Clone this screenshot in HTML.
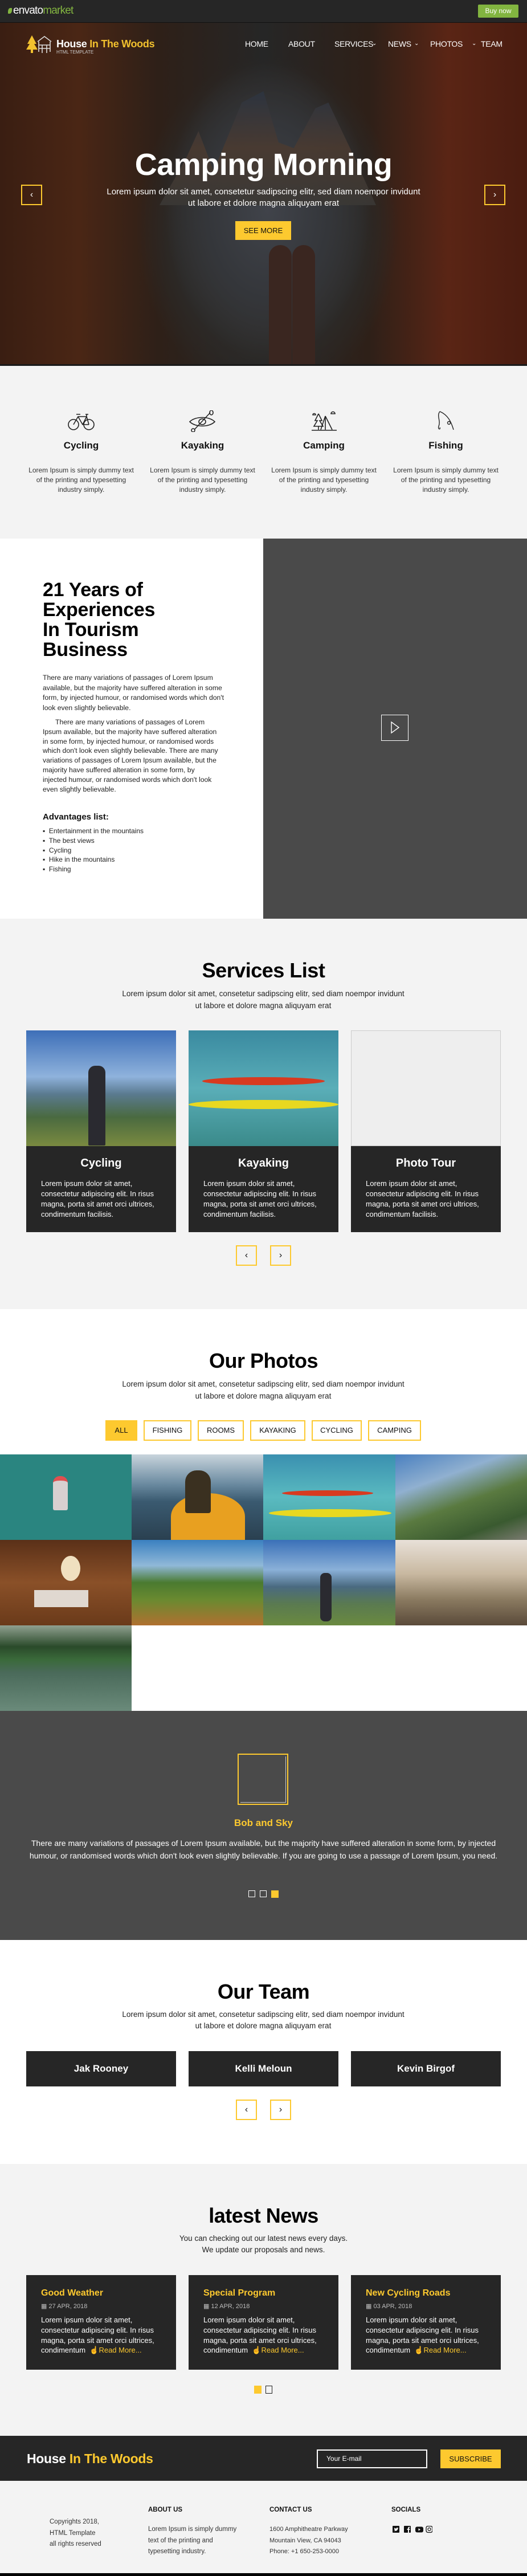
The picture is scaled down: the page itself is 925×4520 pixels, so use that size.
<!DOCTYPE html>
<html><head><meta charset="utf-8">
<style>
*{margin:0;padding:0;box-sizing:border-box}
body{width:925px;height:4520px;position:relative;font-family:"Liberation Sans",sans-serif;background:#fff;overflow:hidden;color:#111}
.a{position:absolute}
.c{text-align:center}
.sec{position:absolute;left:0;width:925px}
h2{font-size:36px;font-weight:bold;color:#000;letter-spacing:-0.5px}
.sub{font-size:13.5px;line-height:21px;color:#222}
.btn{border:2px solid #fdc92f;width:37px;height:36px;display:flex;align-items:center;justify-content:center;font-size:16px;color:#111}
.card{background:#262626;color:#fff}
</style></head><body>

<!-- top bar -->
<div class="sec" style="top:0;height:40px;background:#262626;border-bottom:1px solid #111"></div>
<div class="a" style="left:14px;top:8px;font-size:19px;color:#fff;letter-spacing:-0.8px"><span style="display:inline-block;width:7px;height:10px;background:#82b440;border-radius:60% 10% 60% 10%;margin-right:2px"></span>envato<span style="color:#82b440;font-weight:300">market</span></div>
<div class="a" style="left:839px;top:8px;width:71px;height:23px;background:#82b440;border-radius:2px;color:#fff;font-size:12px;line-height:23px;text-align:center">Buy now</div>

<!-- hero -->
<div class="sec" style="top:40px;height:602px;background:
radial-gradient(ellipse 180px 260px at 470px 330px,#40434a 0%,#34363a 60%,transparent 100%),
radial-gradient(ellipse 230px 300px at 470px 360px,#3a3836 0%,#2c2a28 70%,transparent 100%),
linear-gradient(90deg,#3a1e12 0%,#4a2615 15%,#2e2018 30%,#262626 50%,#2e2018 70%,#5a2515 85%,#4a1c10 100%)"></div>
<div class="a" style="left:280px;top:160px;width:380px;height:200px;background:linear-gradient(180deg,#2c3440,#4a3a30 50%,#3a3835);clip-path:polygon(0 100%,12% 60%,18% 35%,25% 70%,38% 10%,48% 0%,55% 45%,62% 50%,72% 15%,78% 10%,88% 50%,100% 100%);opacity:.9"></div>
<div class="a" style="left:472px;top:430px;width:40px;height:212px;background:#3a2620;border-radius:20px 20px 0 0"></div>
<div class="a" style="left:513px;top:430px;width:40px;height:212px;background:#3a2620;border-radius:20px 20px 0 0"></div>
<div class="sec" style="top:639px;height:3px;background:#1a1a1a"></div>

<svg class="a" style="left:46px;top:61px" width="46" height="34" viewBox="0 0 46 34"><path d="M10 1L2 16h4L0 26h8v6h4v-6h8L14 16h4z" fill="#f2c12e"/><path d="M20 12L32 3 44 12M22 12v18M42 12v18M22 18h20M22 24h20M28 18v14M36 18v14" stroke="#ddd" stroke-width="1.6" fill="none"/></svg>
<div class="a" style="left:99px;top:67px;font-size:18px;font-weight:bold;color:#fff;letter-spacing:-0.3px">House <span style="color:#f2c12e">In The Woods</span></div>
<div class="a" style="left:99px;top:87px;font-size:8px;color:#ccc">HTML TEMPLATE</div>
<div class="a" style="top:69px;left:0;width:925px;font-size:14px;color:#fff;letter-spacing:-0.3px">
<span class="a" style="left:430px">HOME</span><span class="a" style="left:506px">ABOUT</span><span class="a" style="left:587px">SERVICES</span><span class="a" style="left:653px;font-size:10px;top:2px">&#8964;</span><span class="a" style="left:681px">NEWS</span><span class="a" style="left:727px;font-size:10px;top:2px">&#8964;</span><span class="a" style="left:755px">PHOTOS</span><span class="a" style="left:828px;font-size:10px;top:2px">&#8964;</span><span class="a" style="left:844px">TEAM</span></div>

<div class="a c" style="left:0;top:258px;width:925px;font-size:54px;font-weight:bold;color:#fff;letter-spacing:-0.5px">Camping Morning</div>
<div class="a c" style="left:180px;top:327px;width:565px;font-size:15px;line-height:20px;color:#fff">Lorem ipsum dolor sit amet, consetetur sadipscing elitr, sed diam noempor invidunt ut labore et dolore magna aliquyam erat</div>
<div class="a c" style="left:413px;top:388px;width:98px;height:33px;background:#fdc92f;font-size:13px;line-height:33px;color:#111">SEE MORE</div>
<div class="a btn" style="left:37px;top:324px;height:36px;color:#fff">&#8249;</div>
<div class="a btn" style="left:850px;top:324px;height:36px;color:#fff">&#8250;</div>

<!-- features -->
<div class="sec" style="top:642px;height:303px;background:#f3f3f3"></div>
<svg class="a" style="left:119px;top:722px" width="48" height="34" viewBox="0 0 48 34" fill="none" stroke="#222" stroke-width="1.6"><circle cx="10" cy="23" r="9"/><circle cx="37" cy="23" r="9"/><path d="M10 23l8-14h15l4 14M18 9l8 14h11M26 23l7-14M15 5h7M31 5h5M33 5v4"/></svg>
<svg class="a" style="left:331px;top:720px" width="48" height="38" viewBox="0 0 48 38" fill="none" stroke="#222" stroke-width="1.6"><path d="M2 20C12 10 36 10 46 20C36 30 12 30 2 20Z"/><ellipse cx="24" cy="20" rx="6" ry="5"/><path d="M38 4L10 34"/><ellipse cx="40" cy="4" rx="3" ry="4"/><ellipse cx="8" cy="35" rx="3" ry="3"/></svg>
<svg class="a" style="left:545px;top:720px" width="48" height="38" viewBox="0 0 48 38" fill="none" stroke="#222" stroke-width="1.6"><path d="M14 6L8 18h4L6 28h8v6M14 6l6 12h-4l6 10h-8M26 10L18 34M26 10L38 34M26 10v24M2 35h44"/><path d="M4 8a2 2 0 0 1 5 0zM36 6a3 3 0 0 1 7 0z"/></svg>
<svg class="a" style="left:764px;top:720px" width="36" height="38" viewBox="0 0 36 38" fill="none" stroke="#222" stroke-width="1.4"><path d="M8 2C2 10 10 18 6 28c-2 6 4 6 2 2M8 2c14 6 20 18 24 32"/><circle cx="24" cy="22" r="2.5"/></svg>
<div class="a" style="top:772px;left:0;width:925px;font-size:17px;font-weight:bold">
<span class="a c" style="left:36px;width:213px">Cycling</span><span class="a c" style="left:249px;width:213px">Kayaking</span><span class="a c" style="left:462px;width:213px">Camping</span><span class="a c" style="left:676px;width:213px">Fishing</span></div>
<div class="a" style="top:817px;left:0;width:925px;font-size:12px;line-height:17px;color:#333">
<span class="a c" style="left:50px;width:185px">Lorem Ipsum is simply dummy text of the printing and typesetting industry simply.</span><span class="a c" style="left:263px;width:185px">Lorem Ipsum is simply dummy text of the printing and typesetting industry simply.</span><span class="a c" style="left:476px;width:185px">Lorem Ipsum is simply dummy text of the printing and typesetting industry simply.</span><span class="a c" style="left:690px;width:185px">Lorem Ipsum is simply dummy text of the printing and typesetting industry simply.</span></div>

<!-- about -->
<div class="a" style="left:462px;top:945px;width:463px;height:667px;background:#4a4a4a"></div>
<div class="a" style="left:669px;top:1254px;width:48px;height:46px;border:1.5px solid #fff"><svg width="45" height="43" viewBox="0 0 45 43"><path d="M17 12l13 9.5-13 9.5z" fill="none" stroke="#fff" stroke-width="1.4"/></svg></div>
<div class="a" style="left:75px;top:1018px;font-size:34px;line-height:35px;font-weight:bold;color:#000;letter-spacing:-0.3px">21 Years of<br>Experiences<br>In Tourism<br>Business</div>
<div class="a" style="left:75px;top:1181px;width:320px;font-size:12.2px;line-height:17.5px;color:#222">There are many variations of passages of Lorem Ipsum available, but the majority have suffered alteration in some form, by injected humour, or randomised words which don't look even slightly believable.</div>
<div class="a" style="left:75px;top:1259px;width:310px;font-size:12.2px;line-height:16.8px;color:#222;text-indent:22px">There are many variations of passages of Lorem Ipsum available, but the majority have suffered alteration in some form, by injected humour, or randomised words which don't look even slightly believable. There are many variations of passages of Lorem Ipsum available, but the majority have suffered alteration in some form, by injected humour, or randomised words which don't look even slightly believable.</div>
<div class="a" style="left:75px;top:1425px;font-size:15px;font-weight:bold">Advantages list:</div>
<div class="a" style="left:75px;top:1450px;font-size:12px;line-height:16.8px;color:#222">
<div>&#9642;&nbsp; Entertainment in the mountains</div><div>&#9642;&nbsp; The best views</div><div>&#9642;&nbsp; Cycling</div><div>&#9642;&nbsp; Hike in the mountains</div><div>&#9642;&nbsp; Fishing</div></div>

<!-- services -->
<div class="sec" style="top:1612px;height:685px;background:#f3f3f3"></div>
<h2 class="a c" style="left:0;top:1682px;width:925px">Services List</h2>
<div class="a c sub" style="left:162px;top:1733px;width:600px">Lorem ipsum dolor sit amet, consetetur sadipscing elitr, sed diam noempor invidunt<br>ut labore et dolore magna aliquyam erat</div>
<div class="a" style="left:46px;top:1808px;width:263px;height:203px;background:linear-gradient(180deg,#3d6fb8 0%,#8fb2dc 40%,#5a7a90 55%,#4a6a40 75%,#7a8a40 100%)"></div>
<div class="a" style="left:155px;top:1870px;width:30px;height:140px;background:#2a2a30;border-radius:12px 12px 2px 2px"></div>
<div class="a" style="left:331px;top:1808px;width:263px;height:203px;background:linear-gradient(180deg,#3a8aa0,#5aaeb8 50%,#3a8a8a)"></div>
<div class="a" style="left:355px;top:1890px;width:215px;height:14px;background:#d83a20;border-radius:50%"></div>
<div class="a" style="left:331px;top:1930px;width:263px;height:16px;background:#e8d820;border-radius:50%"></div>
<div class="a" style="left:616px;top:1808px;width:263px;height:203px;background:#eee;border:1px solid #ccc"></div>
<div class="a card" style="left:46px;top:2011px;width:263px;height:151px"></div>
<div class="a card" style="left:331px;top:2011px;width:263px;height:151px"></div>
<div class="a card" style="left:616px;top:2011px;width:263px;height:151px"></div>
<div class="a" style="top:2030px;left:0;width:925px;font-size:20px;font-weight:bold;color:#fff">
<span class="a c" style="left:46px;width:263px">Cycling</span><span class="a c" style="left:331px;width:263px">Kayaking</span><span class="a c" style="left:616px;width:263px">Photo Tour</span></div>
<div class="a" style="top:2068px;left:0;width:925px;font-size:13px;color:#fff">
<span class="a" style="left:72px;width:215px;line-height:17.9px">Lorem ipsum dolor sit amet, consectetur adipiscing elit. In risus magna, porta sit amet orci ultrices, condimentum facilisis.</span>
<span class="a" style="left:357px;width:215px;line-height:17.9px">Lorem ipsum dolor sit amet, consectetur adipiscing elit. In risus magna, porta sit amet orci ultrices, condimentum facilisis.</span>
<span class="a" style="left:642px;width:215px;line-height:17.9px">Lorem ipsum dolor sit amet, consectetur adipiscing elit. In risus magna, porta sit amet orci ultrices, condimentum facilisis.</span></div>
<div class="a btn" style="left:414px;top:2185px">&#8249;</div>
<div class="a btn" style="left:474px;top:2185px">&#8250;</div>

<!-- photos -->
<h2 class="a c" style="left:0;top:2367px;width:925px">Our Photos</h2>
<div class="a c sub" style="left:162px;top:2418px;width:600px">Lorem ipsum dolor sit amet, consetetur sadipscing elitr, sed diam noempor invidunt<br>ut labore et dolore magna aliquyam erat</div>
<div class="a" style="top:2492px;left:0;width:925px;font-size:13px;color:#111">
<span class="a c" style="left:185px;width:56px;height:36px;line-height:36px;background:#fdc92f">ALL</span>
<span class="a c" style="left:252px;width:84px;height:36px;line-height:32px;border:2px solid #fdc92f">FISHING</span>
<span class="a c" style="left:347px;width:81px;height:36px;line-height:32px;border:2px solid #fdc92f">ROOMS</span>
<span class="a c" style="left:439px;width:97px;height:36px;line-height:32px;border:2px solid #fdc92f">KAYAKING</span>
<span class="a c" style="left:547px;width:88px;height:36px;line-height:32px;border:2px solid #fdc92f">CYCLING</span>
<span class="a c" style="left:646px;width:93px;height:36px;line-height:32px;border:2px solid #fdc92f">CAMPING</span></div>
<div class="a" style="left:0;top:2552px;width:231px;height:150px;background:#2a8580"></div>
<div class="a" style="left:93px;top:2590px;width:26px;height:60px;background:#d8d0d0;border-radius:12px 12px 3px 3px;border-top:8px solid #e05050"></div>
<div class="a" style="left:231px;top:2552px;width:231px;height:150px;background:linear-gradient(180deg,#c8d4dc 0%,#6a8aa0 35%,#3a5a70 55%,#2a4050 100%)"></div>
<div class="a" style="left:300px;top:2620px;width:130px;height:82px;background:#e8a020;border-radius:50% 50% 0 0"></div>
<div class="a" style="left:325px;top:2580px;width:45px;height:75px;background:#3a3020;border-radius:20px 20px 4px 4px"></div>
<div class="a" style="left:462px;top:2552px;width:232px;height:150px;background:linear-gradient(180deg,#3a90b0,#5abac0 50%,#40a0a0)"></div>
<div class="a" style="left:495px;top:2615px;width:160px;height:10px;background:#d83a20;border-radius:50%"></div>
<div class="a" style="left:472px;top:2648px;width:215px;height:14px;background:#e8d820;border-radius:50%"></div>
<div class="a" style="left:694px;top:2552px;width:231px;height:150px;background:linear-gradient(160deg,#4a80c0 0%,#90b0d0 30%,#5a7a40 55%,#3a5a30 80%,#7a7a70 100%)"></div>
<div class="a" style="left:0;top:2702px;width:231px;height:150px;background:linear-gradient(180deg,#5a3018,#8a5028 50%,#6a3a1a)"></div>
<div class="a" style="left:107px;top:2730px;width:34px;height:44px;background:#f0e0c0;border-radius:50%"></div>
<div class="a" style="left:60px;top:2790px;width:95px;height:30px;background:#e0d8d0"></div>
<div class="a" style="left:231px;top:2702px;width:231px;height:150px;background:linear-gradient(180deg,#3a80c0 0%,#90b8d8 30%,#4a7a30 50%,#6a8a30 70%,#b07030 100%)"></div>
<div class="a" style="left:462px;top:2702px;width:232px;height:150px;background:linear-gradient(180deg,#3a70b8 0%,#8ab0d8 35%,#4a6a80 55%,#5a7a50 75%,#6a8a40 100%)"></div>
<div class="a" style="left:562px;top:2760px;width:20px;height:85px;background:#2a2a30;border-radius:8px"></div>
<div class="a" style="left:694px;top:2702px;width:231px;height:150px;background:linear-gradient(180deg,#e8e0d8 0%,#c8b8a0 40%,#8a7a60 70%,#5a4a3a 100%)"></div>
<div class="a" style="left:0;top:2852px;width:231px;height:150px;background:linear-gradient(180deg,#90a090 0%,#2a4a2a 25%,#3a6a3a 40%,#4a6a5a 55%,#6a8a7a 100%)"></div>

<!-- testimonial -->
<div class="sec" style="top:3002px;height:402px;background:#4a4a4a"></div>
<div class="a" style="left:417px;top:3077px;width:89px;height:90px;border:2px solid #fdc92f"><div style="margin:3px;width:80px;height:81px;border-right:1px solid #ccc;border-bottom:1px solid #ccc"></div></div>
<div class="a c" style="left:0;top:3189px;width:925px;font-size:17px;font-weight:bold;color:#fdc92f">Bob and Sky</div>
<div class="a c" style="left:50px;top:3223px;width:825px;font-size:14px;line-height:22px;color:#fff">There are many variations of passages of Lorem Ipsum available, but the majority have suffered alteration in some form, by injected humour, or randomised words which don't look even slightly believable. If you are going to use a passage of Lorem Ipsum, you need.</div>
<div class="a" style="left:436px;top:3317px;width:12px;height:12px;border:1.5px solid #fff"></div>
<div class="a" style="left:456px;top:3317px;width:12px;height:12px;border:1.5px solid #fff"></div>
<div class="a" style="left:476px;top:3317px;width:13px;height:13px;background:#fdc92f"></div>

<!-- team -->
<h2 class="a c" style="left:0;top:3474px;width:925px">Our Team</h2>
<div class="a c sub" style="left:162px;top:3525px;width:600px;line-height:20px">Lorem ipsum dolor sit amet, consetetur sadipscing elitr, sed diam noempor invidunt<br>ut labore et dolore magna aliquyam erat</div>
<div class="a card c" style="left:46px;top:3599px;width:263px;height:62px;line-height:62px;font-size:17px;font-weight:bold">Jak Rooney</div>
<div class="a card c" style="left:331px;top:3599px;width:263px;height:62px;line-height:62px;font-size:17px;font-weight:bold">Kelli Meloun</div>
<div class="a card c" style="left:616px;top:3599px;width:263px;height:62px;line-height:62px;font-size:17px;font-weight:bold">Kevin Birgof</div>
<div class="a btn" style="left:414px;top:3684px">&#8249;</div>
<div class="a btn" style="left:474px;top:3684px">&#8250;</div>

<!-- news -->
<div class="sec" style="top:3797px;height:477px;background:#f3f3f3"></div>
<h2 class="a c" style="left:0;top:3867px;width:925px">latest News</h2>
<div class="a c sub" style="left:190px;top:3918px;width:545px;line-height:20px">You can checking out our latest news every days.<br>We update our proposals and news.</div>
<div class="a card" style="left:46px;top:3992px;width:263px;height:166px"></div>
<div class="a card" style="left:331px;top:3992px;width:263px;height:166px"></div>
<div class="a card" style="left:616px;top:3992px;width:263px;height:166px"></div>
<div class="a" style="top:4015px;left:0;width:925px;font-size:16px;font-weight:bold;color:#fdc92f">
<span class="a" style="left:72px">Good Weather</span><span class="a" style="left:357px">Special Program</span><span class="a" style="left:642px">New Cycling Roads</span></div>
<div class="a" style="top:4040px;left:0;width:925px;font-size:11px;color:#bbb">
<span class="a" style="left:72px">&#9638; 27 APR, 2018</span><span class="a" style="left:357px">&#9638; 12 APR, 2018</span><span class="a" style="left:642px">&#9638; 03 APR, 2018</span></div>
<div class="a" style="top:4062px;left:0;width:925px;font-size:13px;line-height:17.8px;color:#fff">
<span class="a" style="left:72px;width:215px">Lorem ipsum dolor sit amet, consectetur adipiscing elit. In risus magna, porta sit amet orci ultrices, condimentum&nbsp; <span style="color:#fdc92f">&#9757;Read More...</span></span>
<span class="a" style="left:357px;width:215px">Lorem ipsum dolor sit amet, consectetur adipiscing elit. In risus magna, porta sit amet orci ultrices, condimentum&nbsp; <span style="color:#fdc92f">&#9757;Read More...</span></span>
<span class="a" style="left:642px;width:215px">Lorem ipsum dolor sit amet, consectetur adipiscing elit. In risus magna, porta sit amet orci ultrices, condimentum&nbsp; <span style="color:#fdc92f">&#9757;Read More...</span></span></div>
<div class="a" style="left:446px;top:4186px;width:13px;height:14px;background:#fdc92f"></div>
<div class="a" style="left:466px;top:4186px;width:12px;height:14px;border:1.5px solid #222"></div>

<!-- footer dark -->
<div class="sec" style="top:4274px;height:79px;background:#262626"></div>
<div class="a" style="left:47px;top:4301px;font-size:23px;font-weight:bold;color:#fff;letter-spacing:-0.3px">House <span style="color:#fdc92f">In The Woods</span></div>
<div class="a" style="left:556px;top:4298px;width:194px;height:33px;border:2px solid #fff;color:#fff;font-size:12px;line-height:29px;padding-left:15px">Your E-mail</div>
<div class="a c" style="left:773px;top:4298px;width:106px;height:33px;background:#fdc92f;font-size:13px;line-height:33px;color:#111">SUBSCRIBE</div>

<!-- footer light -->
<div class="sec" style="top:4353px;height:162px;background:#f3f3f3"></div>
<div class="sec" style="top:4515px;height:5px;background:#000"></div>
<div class="a" style="left:87px;top:4416px;font-size:11.5px;line-height:19.5px;color:#333">Copyrights 2018,<br>HTML Template<br>all rights reserved</div>
<div class="a" style="left:260px;top:4398px;font-size:11.5px;font-weight:bold">ABOUT US</div>
<div class="a" style="left:260px;top:4429px;font-size:11.5px;line-height:19.5px;color:#333">Lorem Ipsum is simply dummy<br>text of the printing and<br>typesetting industry.</div>
<div class="a" style="left:473px;top:4398px;font-size:11.5px;font-weight:bold">CONTACT US</div>
<div class="a" style="left:473px;top:4429px;font-size:11px;line-height:19.5px;color:#333">1600 Amphitheatre Parkway<br>Mountain View, CA 94043<br>Phone: +1 650-253-0000</div>
<div class="a" style="left:687px;top:4398px;font-size:11.5px;font-weight:bold">SOCIALS</div>
<svg class="a" style="left:689px;top:4432px" width="70" height="13" viewBox="0 0 70 13"><rect x="0" y="0" width="12" height="12" rx="1" fill="#111"/><path d="M2.5 8.5c3 1.5 6.5 0 7-4l1-1-1.2.2c-.8-1-2.6-.6-2.6 1-1.5 0-2.8-.6-3.6-1.5-.5 1 0 2 .8 2.4-.5 0-.8 0-1-.2 0 1 .7 1.6 1.4 1.8-.4.2-.8.2-1.2 0 .3.8 1 1.2 1.8 1.2-.8.7-1.7 1-2.4 1z" fill="#fff"/><rect x="20" y="0" width="12" height="12" rx="1" fill="#111"/><path d="M27 12V7h-1.5V5.3H27V4c0-1.5 1-2.3 2.3-2.3h1.2v1.6h-.9c-.6 0-.7.3-.7.7v1.3h1.6L30.3 7h-1.4v5z" fill="#fff"/><rect x="40" y="1.5" width="14" height="10" rx="3" fill="#111"/><path d="M45.5 4.3l3.5 2.2-3.5 2.2z" fill="#fff"/><rect x="59" y="0.5" width="11" height="11" rx="3" fill="none" stroke="#111" stroke-width="1.3"/><circle cx="64.5" cy="6" r="2.5" fill="none" stroke="#111" stroke-width="1.2"/></svg>
</body></html>
